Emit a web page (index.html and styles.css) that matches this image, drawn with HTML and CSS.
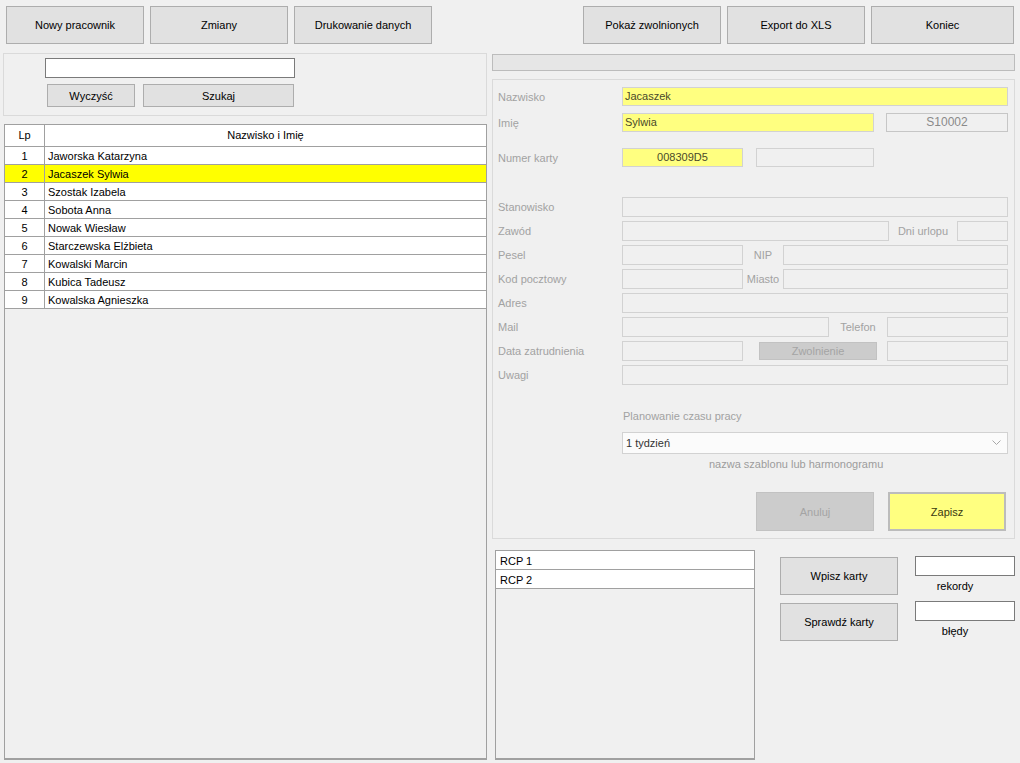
FILE: index.html
```html
<!DOCTYPE html>
<html lang="pl">
<head>
<meta charset="utf-8">
<title>Pracownicy</title>
<link rel="stylesheet" href="styles.css">
</head>
<body>
<div class="app">
  <div class="toolbar">
    <div class="group">
      <button class="btn tb">Nowy pracownik</button>
      <button class="btn tb">Zmiany</button>
      <button class="btn tb">Drukowanie danych</button>
    </div>
    <div class="group">
      <button class="btn tb">Pokaż zwolnionych</button>
      <button class="btn tb">Export do XLS</button>
      <button class="btn tb wide">Koniec</button>
    </div>
  </div>

  <div class="main">
    <div class="left">
      <div class="search">
        <div class="search-input"></div>
        <div class="search-btns">
          <button class="btn sbtn w88">Wyczyść</button>
          <button class="btn sbtn w151">Szukaj</button>
        </div>
      </div>
      <div class="grid">
        <div class="row head"><div class="c1">Lp</div><div class="c2 center">Nazwisko i Imię</div></div>
        <div class="row"><div class="c1">1</div><div class="c2">Jaworska Katarzyna</div></div>
        <div class="row sel"><div class="c1">2</div><div class="c2">Jacaszek Sylwia</div></div>
        <div class="row"><div class="c1">3</div><div class="c2">Szostak Izabela</div></div>
        <div class="row"><div class="c1">4</div><div class="c2">Sobota Anna</div></div>
        <div class="row"><div class="c1">5</div><div class="c2">Nowak Wiesław</div></div>
        <div class="row"><div class="c1">6</div><div class="c2">Starczewska Elżbieta</div></div>
        <div class="row"><div class="c1">7</div><div class="c2">Kowalski Marcin</div></div>
        <div class="row"><div class="c1">8</div><div class="c2">Kubica Tadeusz</div></div>
        <div class="row"><div class="c1">9</div><div class="c2">Kowalska Agnieszka</div></div>
      </div>
    </div>

    <div class="right">
      <div class="progress"></div>
      <div class="form">
        <div class="frow r1">
          <span class="lbl">Nazwisko</span>
          <div class="f y w386 h19">Jacaszek</div>
        </div>
        <div class="frow r2">
          <span class="lbl">Imię</span>
          <div class="f y w252 h19">Sylwia</div>
          <div class="f code w122 h19 ml12">S10002</div>
        </div>
        <div class="frow r3">
          <span class="lbl">Numer karty</span>
          <div class="f y w121 h19 tc">008309D5</div>
          <div class="f w118 h19 ml13"></div>
        </div>
        <div class="frow r4">
          <span class="lbl">Stanowisko</span>
          <div class="f w386"></div>
        </div>
        <div class="frow rn">
          <span class="lbl">Zawód</span>
          <div class="f w267"></div>
          <span class="sub w68">Dni urlopu</span>
          <div class="f w51"></div>
        </div>
        <div class="frow rn">
          <span class="lbl">Pesel</span>
          <div class="f w121"></div>
          <span class="sub w40">NIP</span>
          <div class="f w225"></div>
        </div>
        <div class="frow rn">
          <span class="lbl">Kod pocztowy</span>
          <div class="f w121"></div>
          <span class="sub w40">Miasto</span>
          <div class="f w225"></div>
        </div>
        <div class="frow rn">
          <span class="lbl">Adres</span>
          <div class="f w386"></div>
        </div>
        <div class="frow rn">
          <span class="lbl">Mail</span>
          <div class="f w207"></div>
          <span class="sub w58">Telefon</span>
          <div class="f w121"></div>
        </div>
        <div class="frow rn">
          <span class="lbl">Data zatrudnienia</span>
          <div class="f w121"></div>
          <button class="btn dis zw">Zwolnienie</button>
          <div class="f w121"></div>
        </div>
        <div class="frow rn">
          <span class="lbl">Uwagi</span>
          <div class="f w386"></div>
        </div>

        <div class="plan">
          <div class="plan-lbl">Planowanie czasu pracy</div>
          <div class="combo">
            <span>1 tydzień</span>
            <svg class="arrow" width="9" height="6" viewBox="0 0 9 6"><path d="M0.5 0.5 L4.5 4.5 L8.5 0.5" fill="none" stroke="#a8a8a8" stroke-width="1"/></svg>
          </div>
          <div class="plan-cap">nazwa szablonu lub harmonogramu</div>
        </div>

        <div class="actions">
          <button class="btn dis act">Anuluj</button>
          <button class="btn save act">Zapisz</button>
        </div>
      </div>

      <div class="bottom">
        <div class="list">
          <div class="lrow">RCP 1</div>
          <div class="lrow">RCP 2</div>
        </div>
        <div class="cards">
          <button class="btn cbtn">Wpisz karty</button>
          <button class="btn cbtn">Sprawdź karty</button>
        </div>
        <div class="counts">
          <div class="cnt"></div>
          <div class="cnt-lbl">rekordy</div>
          <div class="cnt second"></div>
          <div class="cnt-lbl">błędy</div>
        </div>
      </div>
    </div>
  </div>
</div>
</body>
</html>
```

FILE: styles.css
```css
* { box-sizing: border-box; }

body {
  margin: 0;
  background: #f0f0f0;
  font-family: "Liberation Sans", Arial, sans-serif;
  font-size: 11px;
  color: #000;
}

.app {
  width: 1020px;
  height: 763px;
  overflow: hidden;
}

/* toolbar */
.toolbar {
  display: flex;
  justify-content: space-between;
  padding: 6px 6px 0 6px;
}
.group {
  display: flex;
  gap: 6px;
}
.btn {
  font: inherit;
  background: #e1e1e1;
  border: 1px solid #adadad;
  color: #000;
  padding: 0;
  margin: 0;
  display: flex;
  align-items: center;
  justify-content: center;
}
.tb { width: 138px; height: 38px; }
.tb.wide { width: 143px; }

/* main */
.main {
  display: flex;
  gap: 5px;
  margin-top: 9px;
  padding-left: 3px;
}

.left {
  width: 484px;
  display: flex;
  flex-direction: column;
}
.search {
  height: 63px;
  border: 1px solid #dadada;
  padding: 4px 0 0 41px;
}
.search-input {
  width: 250px;
  height: 20px;
  border: 1px solid #7a7a7a;
  background: #fff;
}
.search-btns {
  display: flex;
  gap: 8px;
  margin: 6px 0 0 2px;
}
.sbtn { height: 23px; }
.w88 { width: 88px; }
.w151 { width: 151px; }

.grid {
  margin: 8px 0 0 1px;
  width: 483px;
  height: 636px;
  border: 1px solid #a0a0a0;
  border-bottom: 2px solid #a0a0a0;
}
.row {
  display: grid;
  grid-template-columns: 40px 1fr;
  height: 18px;
  line-height: 18px;
  background: #fff;
  border-bottom: 1px solid #a0a0a0;
}
.row.head {
  height: 22px;
  line-height: 21px;
}
.c1 {
  text-align: center;
  border-right: 1px solid #a0a0a0;
}
.c2 { padding-left: 3px; }
.c2.center { text-align: center; padding-left: 0; }
.row.sel { background: #ffff00; }

/* right */
.right {
  width: 523px;
  display: flex;
  flex-direction: column;
}
.progress {
  margin-top: 1px;
  height: 17px;
  background: #e6e6e6;
  border: 1px solid #bcbcbc;
}
.form {
  margin-top: 8px;
  height: 460px;
  border: 1px solid #dadada;
  padding: 7px 6px 0 5px;
}
.frow {
  display: flex;
  align-items: center;
}
.r2 { margin-top: 7px; }
.r3 { margin-top: 16px; }
.r4 { margin-top: 30px; }
.rn { margin-top: 4px; }

.lbl {
  width: 124px;
  flex: none;
  color: #a2a2a2;
}
.sub {
  flex: none;
  text-align: center;
  color: #a2a2a2;
}
.f {
  flex: none;
  height: 20px;
  border: 1px solid #d2d2d2;
  background: #f0f0f0;
  line-height: 17px;
  padding-left: 2px;
}
.f.h19 { height: 19px; }
.f.y {
  background: #ffff80;
  color: #4a4a2a;
}
.f.tc { text-align: center; padding-left: 0; }
.f.code {
  text-align: center;
  color: #8a8a8a;
  border-color: #c6c6c6;
  font-size: 12px;
  padding-left: 0;
}
.ml12 { margin-left: 12px; }
.ml13 { margin-left: 13px; }
.w386 { width: 386px; }
.w252 { width: 252px; }
.w122 { width: 122px; }
.w121 { width: 121px; }
.w118 { width: 118px; }
.w267 { width: 267px; }
.w51 { width: 51px; }
.w225 { width: 225px; }
.w207 { width: 207px; }
.w68 { width: 68px; }
.w58 { width: 58px; }
.w40 { width: 40px; }

.btn.dis {
  background: #cccccc;
  border-color: #c2c2c2;
  color: #a4a4a4;
}
.zw {
  width: 118px;
  height: 18px;
  margin: 0 10px 0 16px;
}

.plan {
  margin: 25px 0 0 124px;
}
.plan-lbl {
  color: #a2a2a2;
  line-height: 13px;
  padding-left: 1px;
}
.combo {
  margin-top: 9px;
  width: 386px;
  height: 22px;
  border: 1px solid #d2d2d2;
  background: #fbfbfb;
  display: flex;
  align-items: center;
  justify-content: space-between;
  padding: 0 6px 0 3px;
  color: #333;
}
.arrow { display: block; }
.plan-cap {
  margin: 4px 0 0 87px;
  color: #9c9c9c;
  line-height: 13px;
}

.actions {
  display: flex;
  justify-content: flex-end;
  gap: 14px;
  margin: 21px 2px 0 0;
}
.act {
  width: 118px;
  height: 39px;
}
.btn.save {
  background: #ffff80;
  border: 2px solid #bcbcbc;
  color: #3a3a10;
}

/* bottom */
.bottom {
  display: flex;
  margin-top: 11px;
}
.list {
  margin-left: 3px;
  width: 260px;
  height: 210px;
  border: 1px solid #a0a0a0;
  border-bottom: 2px solid #a0a0a0;
}
.lrow {
  height: 19px;
  line-height: 20px;
  background: #fff;
  border-bottom: 1px solid #a0a0a0;
  padding-left: 4px;
}
.cards {
  margin-left: 25px;
  padding-top: 7px;
  display: flex;
  flex-direction: column;
  gap: 8px;
}
.cbtn {
  width: 118px;
  height: 38px;
}
.counts {
  margin-left: 17px;
  width: 100px;
  padding-top: 6px;
}
.cnt {
  width: 100px;
  height: 20px;
  border: 1px solid #7a7a7a;
  background: #fff;
}
.cnt.second { margin-top: 8px; }
.cnt-lbl {
  width: 80px;
  text-align: center;
  margin-top: 4px;
  line-height: 13px;
}
```
